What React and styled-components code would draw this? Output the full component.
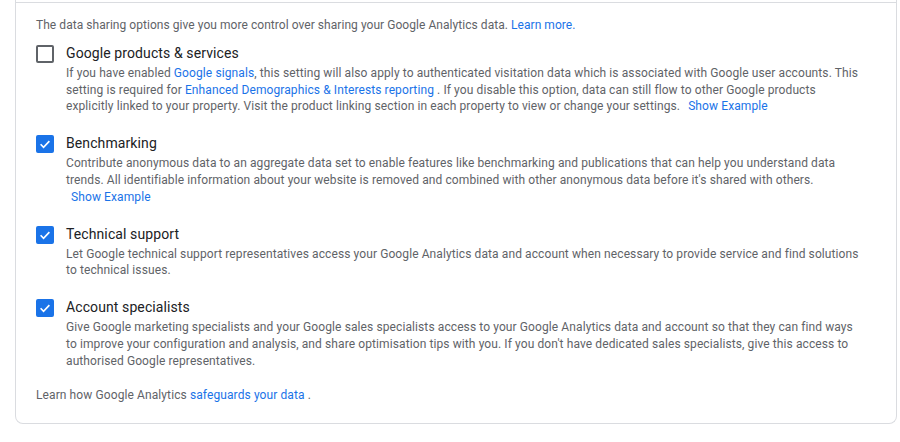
import React from "react";
import styled, { createGlobalStyle } from "styled-components";

const GlobalStyle = createGlobalStyle`
  body {
    margin: 0;
    background: #fff;
    font-family: Roboto, "Liberation Sans", Arial, sans-serif;
  }
`;

const Card = styled.div`
  margin: 0 3px 0 15px;
  padding-top: 2px;
  border: 1px solid #dadce0;
  border-top: none;
  border-radius: 0 0 8px 8px;
  background: #fff;
`;

const Divider = styled.div`
  height: 1px;
  background: #dadce0;
`;

const Content = styled.div`
  padding: 14px 20px 19px 20px;
`;

const Intro = styled.p`
  margin: 0;
  font-size: 12px;
  line-height: 17px;
  color: #5f6368;
  letter-spacing: 0.05px;
`;

const List = styled.div`
  display: flex;
  flex-direction: column;
  gap: 18.2px;
  margin-top: 9px;
`;

const Option = styled.div`
  display: flex;
  align-items: flex-start;
  gap: 12px;
`;

const Box = styled.div`
  flex: none;
  box-sizing: border-box;
  width: 18px;
  height: 18px;
  margin-top: 2px;
  border-radius: 2px;
  border: 2px solid ${(p) => (p.$checked ? "#1a73e8" : "#5f6368")};
  background: ${(p) => (p.$checked ? "#1a73e8" : "#fff")};
  display: flex;
  align-items: center;
  justify-content: center;
`;

const Text = styled.div`
  flex: 1;
  min-width: 0;
  max-width: 798px;
`;

const Label = styled.div`
  font-size: 14px;
  line-height: 20px;
  color: #202124;
  letter-spacing: 0.1px;
  margin-bottom: 2px;
`;

const Description = styled.p`
  margin: 0;
  font-size: 12px;
  line-height: 16.7px;
  color: #5f6368;
  letter-spacing: 0.1px;
`;

const Link = styled.a`
  color: #1a73e8;
  text-decoration: none;
`;

const ExampleLink = styled(Link)`
  margin-left: 5px;
  white-space: nowrap;
`;

const Footer = styled.p`
  margin: 18px 0 0;
  font-size: 12px;
  line-height: 17px;
  color: #5f6368;
  letter-spacing: 0.1px;
`;

const options = [
  {
    id: "products",
    label: "Google products & services",
    checked: false,
    body: (
      <>
        If you have enabled <Link href="#">Google signals</Link>, this setting will also apply to
        authenticated visitation data which is associated with Google user accounts. This setting is
        required for <Link href="#">Enhanced Demographics &amp; Interests reporting</Link> . If you
        disable this option, data can still flow to other Google products explicitly linked to your
        property. Visit the product linking section in each property to view or change your
        settings.{" "}
      </>
    ),
    example: true,
  },
  {
    id: "benchmarking",
    label: "Benchmarking",
    checked: true,
    body: (
      <>
        Contribute anonymous data to an aggregate data set to enable features like benchmarking and
        publications that can help you understand data trends. All identifiable information about
        your website is removed and combined with other anonymous data before it's shared with
        others.{" "}
      </>
    ),
    example: true,
  },
  {
    id: "support",
    label: "Technical support",
    checked: true,
    body: (
      <>
        Let Google technical support representatives access your Google Analytics data and account
        when necessary to provide service and find solutions to technical issues.
      </>
    ),
  },
  {
    id: "specialists",
    label: "Account specialists",
    checked: true,
    body: (
      <>
        Give Google marketing specialists and your Google sales specialists access to your Google
        Analytics data and account so that they can find ways to improve your configuration and
        analysis, and share optimisation tips with you. If you don't have dedicated sales
        specialists, give this access to authorised Google representatives.
      </>
    ),
  },
];

const Checkbox = ({ checked }) => (
  <Box $checked={checked}>
    {checked && (
      <svg width="14" height="14" viewBox="0 0 24 24">
        <path d="M4.5 12.5l5 5L19.5 7" fill="none" stroke="#fff" strokeWidth="2.8" />
      </svg>
    )}
  </Box>
);

export default function App() {
  return (
    <>
      <GlobalStyle />
      <Card>
        <Divider />
        <Content>
          <Intro>
            The data sharing options give you more control over sharing your Google Analytics data.{" "}
            <Link href="#">Learn more.</Link>
          </Intro>
          <List>
            {options.map((o) => (
              <Option key={o.id}>
                <Checkbox checked={o.checked} />
                <Text>
                  <Label>{o.label}</Label>
                  <Description>
                    {o.body}
                    {o.example && <ExampleLink href="#">Show Example</ExampleLink>}
                  </Description>
                </Text>
              </Option>
            ))}
          </List>
          <Footer>
            Learn how Google Analytics <Link href="#">safeguards your data</Link> .
          </Footer>
        </Content>
      </Card>
    </>
  );
}
